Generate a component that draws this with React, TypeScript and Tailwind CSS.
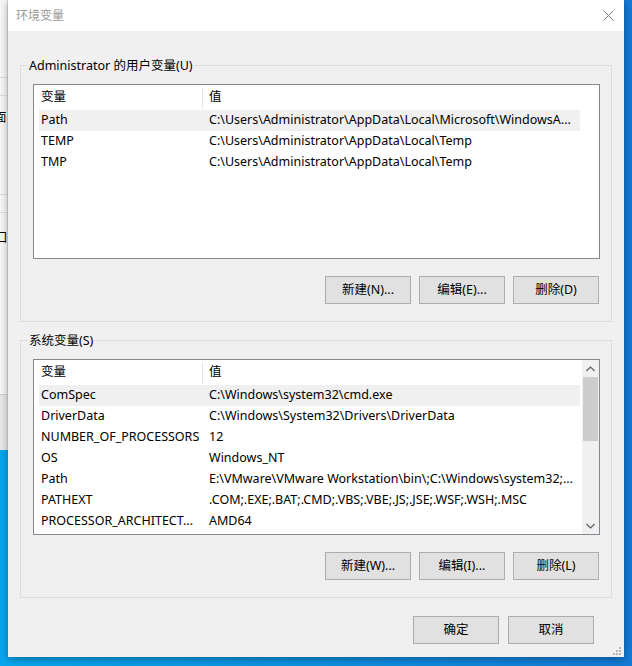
import type { ReactNode } from "react";

type Row = { name: string; value: string; selected?: boolean };

const USER_VARS: Row[] = [
  { name: "Path", value: String.raw`C:\Users\Administrator\AppData\Local\Microsoft\WindowsA...`, selected: true },
  { name: "TEMP", value: String.raw`C:\Users\Administrator\AppData\Local\Temp` },
  { name: "TMP", value: String.raw`C:\Users\Administrator\AppData\Local\Temp` },
];

const SYSTEM_VARS: Row[] = [
  { name: "ComSpec", value: String.raw`C:\Windows\system32\cmd.exe`, selected: true },
  { name: "DriverData", value: String.raw`C:\Windows\System32\Drivers\DriverData` },
  { name: "NUMBER_OF_PROCESSORS", value: "12" },
  { name: "OS", value: "Windows_NT" },
  { name: "Path", value: String.raw`E:\VMware\VMware Workstation\bin\;C:\Windows\system32;...` },
  { name: "PATHEXT", value: ".COM;.EXE;.BAT;.CMD;.VBS;.VBE;.JS;.JSE;.WSF;.WSH;.MSC" },
  { name: "PROCESSOR_ARCHITECT...", value: "AMD64" },
];

function Button({ children }: { children: ReactNode }) {
  return (
    <button
      type="button"
      className="flex h-[28px] w-[86px] items-center justify-center border border-[#adadad] bg-[#e1e1e1] text-[12.5px] text-black"
    >
      {children}
    </button>
  );
}

function Chevron({ up }: { up?: boolean }) {
  return (
    <svg width="9" height="6" viewBox="0 0 9 6" className="text-[#606060]">
      <polyline
        points={up ? "0.5,5 4.5,1 8.5,5" : "0.5,1 4.5,5 8.5,1"}
        fill="none"
        stroke="currentColor"
        strokeWidth="1.2"
      />
    </svg>
  );
}

function VarList({ rows, scroll, height }: { rows: Row[]; scroll?: boolean; height: string }) {
  return (
    <div className={`flex ${height} border border-[#828790] bg-white`}>
      <div className="flex-1 overflow-hidden">
        <div className="ml-[5px] grid h-[25px] w-[541px] grid-cols-[163px_1fr] items-center">
          <span className="pl-[2px]">变量</span>
          <span className="flex h-[22px] items-center border-l border-[#e5e5e5] pl-[6px]">值</span>
        </div>
        {rows.map((r, i) => (
          <div
            key={i}
            className={`ml-[5px] grid h-[21px] w-[541px] grid-cols-[163px_1fr] items-center whitespace-nowrap ${
              r.selected ? "bg-[#f0f0f0]" : ""
            }`}
          >
            <span className="overflow-hidden pl-[2px]">{r.name}</span>
            <span className="overflow-hidden pl-[7px]">{r.value}</span>
          </div>
        ))}
      </div>
      {scroll && (
        <div className="flex w-[17px] flex-col items-center bg-[#f0f0f0]">
          <div className="flex h-[17px] items-center justify-center">
            <Chevron up />
          </div>
          <div className="h-[64px] w-[15px] bg-[#cdcdcd]" />
          <div className="flex-1" />
          <div className="flex h-[17px] items-center justify-center">
            <Chevron />
          </div>
        </div>
      )}
    </div>
  );
}

function Group({ label, children }: { label: string; children: ReactNode }) {
  return (
    <div className="relative w-[592px] border border-[#dcdcdc] pb-[17px] pl-[12px] pr-[11px] pt-[18px]">
      <span className="absolute -top-[8px] left-[7px] bg-[#f0f0f0] px-[1px] leading-[16px]">{label}</span>
      {children}
    </div>
  );
}

export default function App() {
  return (
    <div className="flex h-[666px] w-[632px] overflow-hidden bg-linear-to-r from-[#08a6ee] to-[#137ad6] font-['Noto_Sans','Noto_Sans_CJK_SC',sans-serif] text-[12.5px] text-black">
      {/* sliver of the window behind */}
      <div className="flex w-[8px] flex-col">
        <div className="flex h-[450px] flex-col overflow-hidden border-r border-[#d8d8d8] bg-[#f7f7f7]">
          <div className="mt-[77px] h-px bg-[#dcdcdc]" />
          <div className="mt-[17px] h-px bg-[#dcdcdc]" />
          <span className="-ml-[6px] mt-[16px] leading-[12px]">面</span>
          <div className="mt-[70px] h-px bg-[#dcdcdc]" />
          <div className="mt-[17px] h-px bg-[#dcdcdc]" />
          <span className="-ml-[5px] mt-[19px] leading-[12px]">口</span>
          <div className="mt-[150px] h-px bg-[#cfcfcf]" />
          <div className="flex-1 bg-[#e8e8e8]" />
        </div>
      </div>

      <div className="flex w-[616px] flex-col">
        <div className="flex h-[657px] flex-col bg-[#f0f0f0] shadow-[0_2px_8px_rgba(0,0,0,0.35)]">
          <div className="flex h-[31px] items-center justify-between bg-white pl-[8px] pr-[10px]">
            <span className="text-[12px] text-[#9a9a9a]">环境变量</span>
            <svg width="11" height="11" viewBox="0 0 11 11" className="text-[#7a7a7a]">
              <path d="M0.5 0.5 L10.5 10.5 M10.5 0.5 L0.5 10.5" stroke="currentColor" strokeWidth="1" />
            </svg>
          </div>

          <div className="flex flex-1 flex-col px-[12px] pt-[34px]">
            <Group label="Administrator 的用户变量(U)">
              <VarList rows={USER_VARS} height="h-[175px]" />
              <div className="mt-[17px] flex justify-end gap-2 pr-px">
                <Button>新建(N)...</Button>
                <Button>编辑(E)...</Button>
                <Button>删除(D)</Button>
              </div>
            </Group>

            <div className="mt-[18px]">
              <Group label="系统变量(S)">
                <VarList rows={SYSTEM_VARS} scroll height="h-[176px]" />
                <div className="mt-[17px] flex justify-end gap-2 pr-px">
                  <Button>新建(W)...</Button>
                  <Button>编辑(I)...</Button>
                  <Button>删除(L)</Button>
                </div>
              </Group>
            </div>

            <div className="mt-[18px] flex justify-end gap-[9px] pr-[18px]">
              <Button>确定</Button>
              <Button>取消</Button>
            </div>

            <div className="mt-auto flex justify-end pb-[2px]">
              <svg width="8" height="8" viewBox="0 0 8 8" className="-mr-[9px] text-[#b8b8b8]">
                <rect x="6" y="0" width="2" height="2" fill="currentColor" />
                <rect x="3" y="3" width="2" height="2" fill="currentColor" />
                <rect x="6" y="3" width="2" height="2" fill="currentColor" />
                <rect x="0" y="6" width="2" height="2" fill="currentColor" />
                <rect x="3" y="6" width="2" height="2" fill="currentColor" />
                <rect x="6" y="6" width="2" height="2" fill="currentColor" />
              </svg>
            </div>
          </div>
        </div>
      </div>

      <div className="w-[8px]" />
    </div>
  );
}
